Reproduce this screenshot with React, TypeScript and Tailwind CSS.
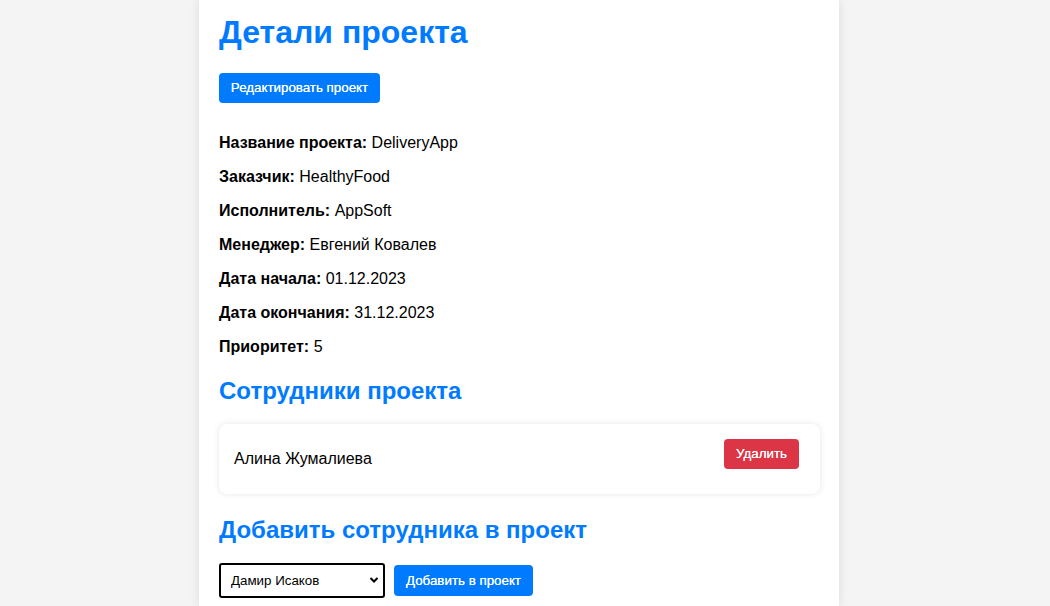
import { useState } from 'react';

const FIELDS: [string, string][] = [
  ['Название проекта:', 'DeliveryApp'],
  ['Заказчик:', 'HealthyFood'],
  ['Исполнитель:', 'AppSoft'],
  ['Менеджер:', 'Евгений Ковалев'],
  ['Дата начала:', '01.12.2023'],
  ['Дата окончания:', '31.12.2023'],
  ['Приоритет:', '5'],
];

export default function App() {
  const [emp, setEmp] = useState('Дамир Исаков');

  return (
    <div className="min-h-screen bg-[#f4f4f4] font-['Liberation_Sans',Arial,sans-serif] text-black">
      <div className="ml-[199px] w-[640px] min-h-[606px] bg-white px-5 pt-[14px] shadow-[0_0_10px_rgba(0,0,0,0.1)]">
        <h1 className="text-[32px] leading-[37px] font-bold text-[#007bff]">Детали проекта</h1>

        <button className="mt-[22px] h-[30px] w-[161px] rounded bg-[#007bff] text-[13.333px] text-white [text-shadow:0_0_0.4px_#fff]">
          Редактировать проект
        </button>

        {/* Project fields */}
        <div className="mt-[31px] flex flex-col gap-4">
          {FIELDS.map(([label, value]) => (
            <p key={label} className="text-[16px] leading-[18px]">
              <span className="font-bold">{label}</span> {value}
            </p>
          ))}
        </div>

        <h2 className="mt-[21px] text-[24px] leading-[28px] font-bold text-[#007bff]">Сотрудники проекта</h2>

        <div className="mt-[19px] flex h-[70px] w-[601px] items-center justify-between rounded-lg bg-white pl-[15px] pr-[21px] shadow-[0_0_6px_rgba(0,0,0,0.1)]">
          <span className="text-[16px]">Алина Жумалиева</span>
          <button className="mb-[10px] h-[30px] w-[75px] rounded bg-[#dc3545] text-[13.333px] text-white [text-shadow:0_0_0.4px_#fff]">
            Удалить
          </button>
        </div>

        <h2 className="mt-[22px] text-[24px] leading-[28px] font-bold text-[#007bff]">Добавить сотрудника в проект</h2>

        <div className="mt-[19px] flex items-start gap-[9px]">
          <div className="relative h-[35px] w-[166px]">
            <select
              value={emp}
              onChange={(e) => setEmp(e.target.value)}
              className="h-full w-full appearance-none rounded-[3px] border-2 border-black bg-white pl-[10px] text-[13.333px] outline-none"
            >
              <option>Дамир Исаков</option>
              <option>Алина Жумалиева</option>
            </select>
            <svg
              className="pointer-events-none absolute right-[6px] top-[13px]"
              width="10"
              height="8"
              viewBox="0 0 10 8"
            >
              <path d="M1.5 2 L5 5.5 L8.5 2" fill="none" stroke="#000" strokeWidth="2" />
            </svg>
          </div>
          <button className="mt-[2px] h-[31px] w-[139px] rounded bg-[#007bff] text-[13.333px] text-white [text-shadow:0_0_0.4px_#fff]">
            Добавить в проект
          </button>
        </div>
      </div>
    </div>
  );
}
